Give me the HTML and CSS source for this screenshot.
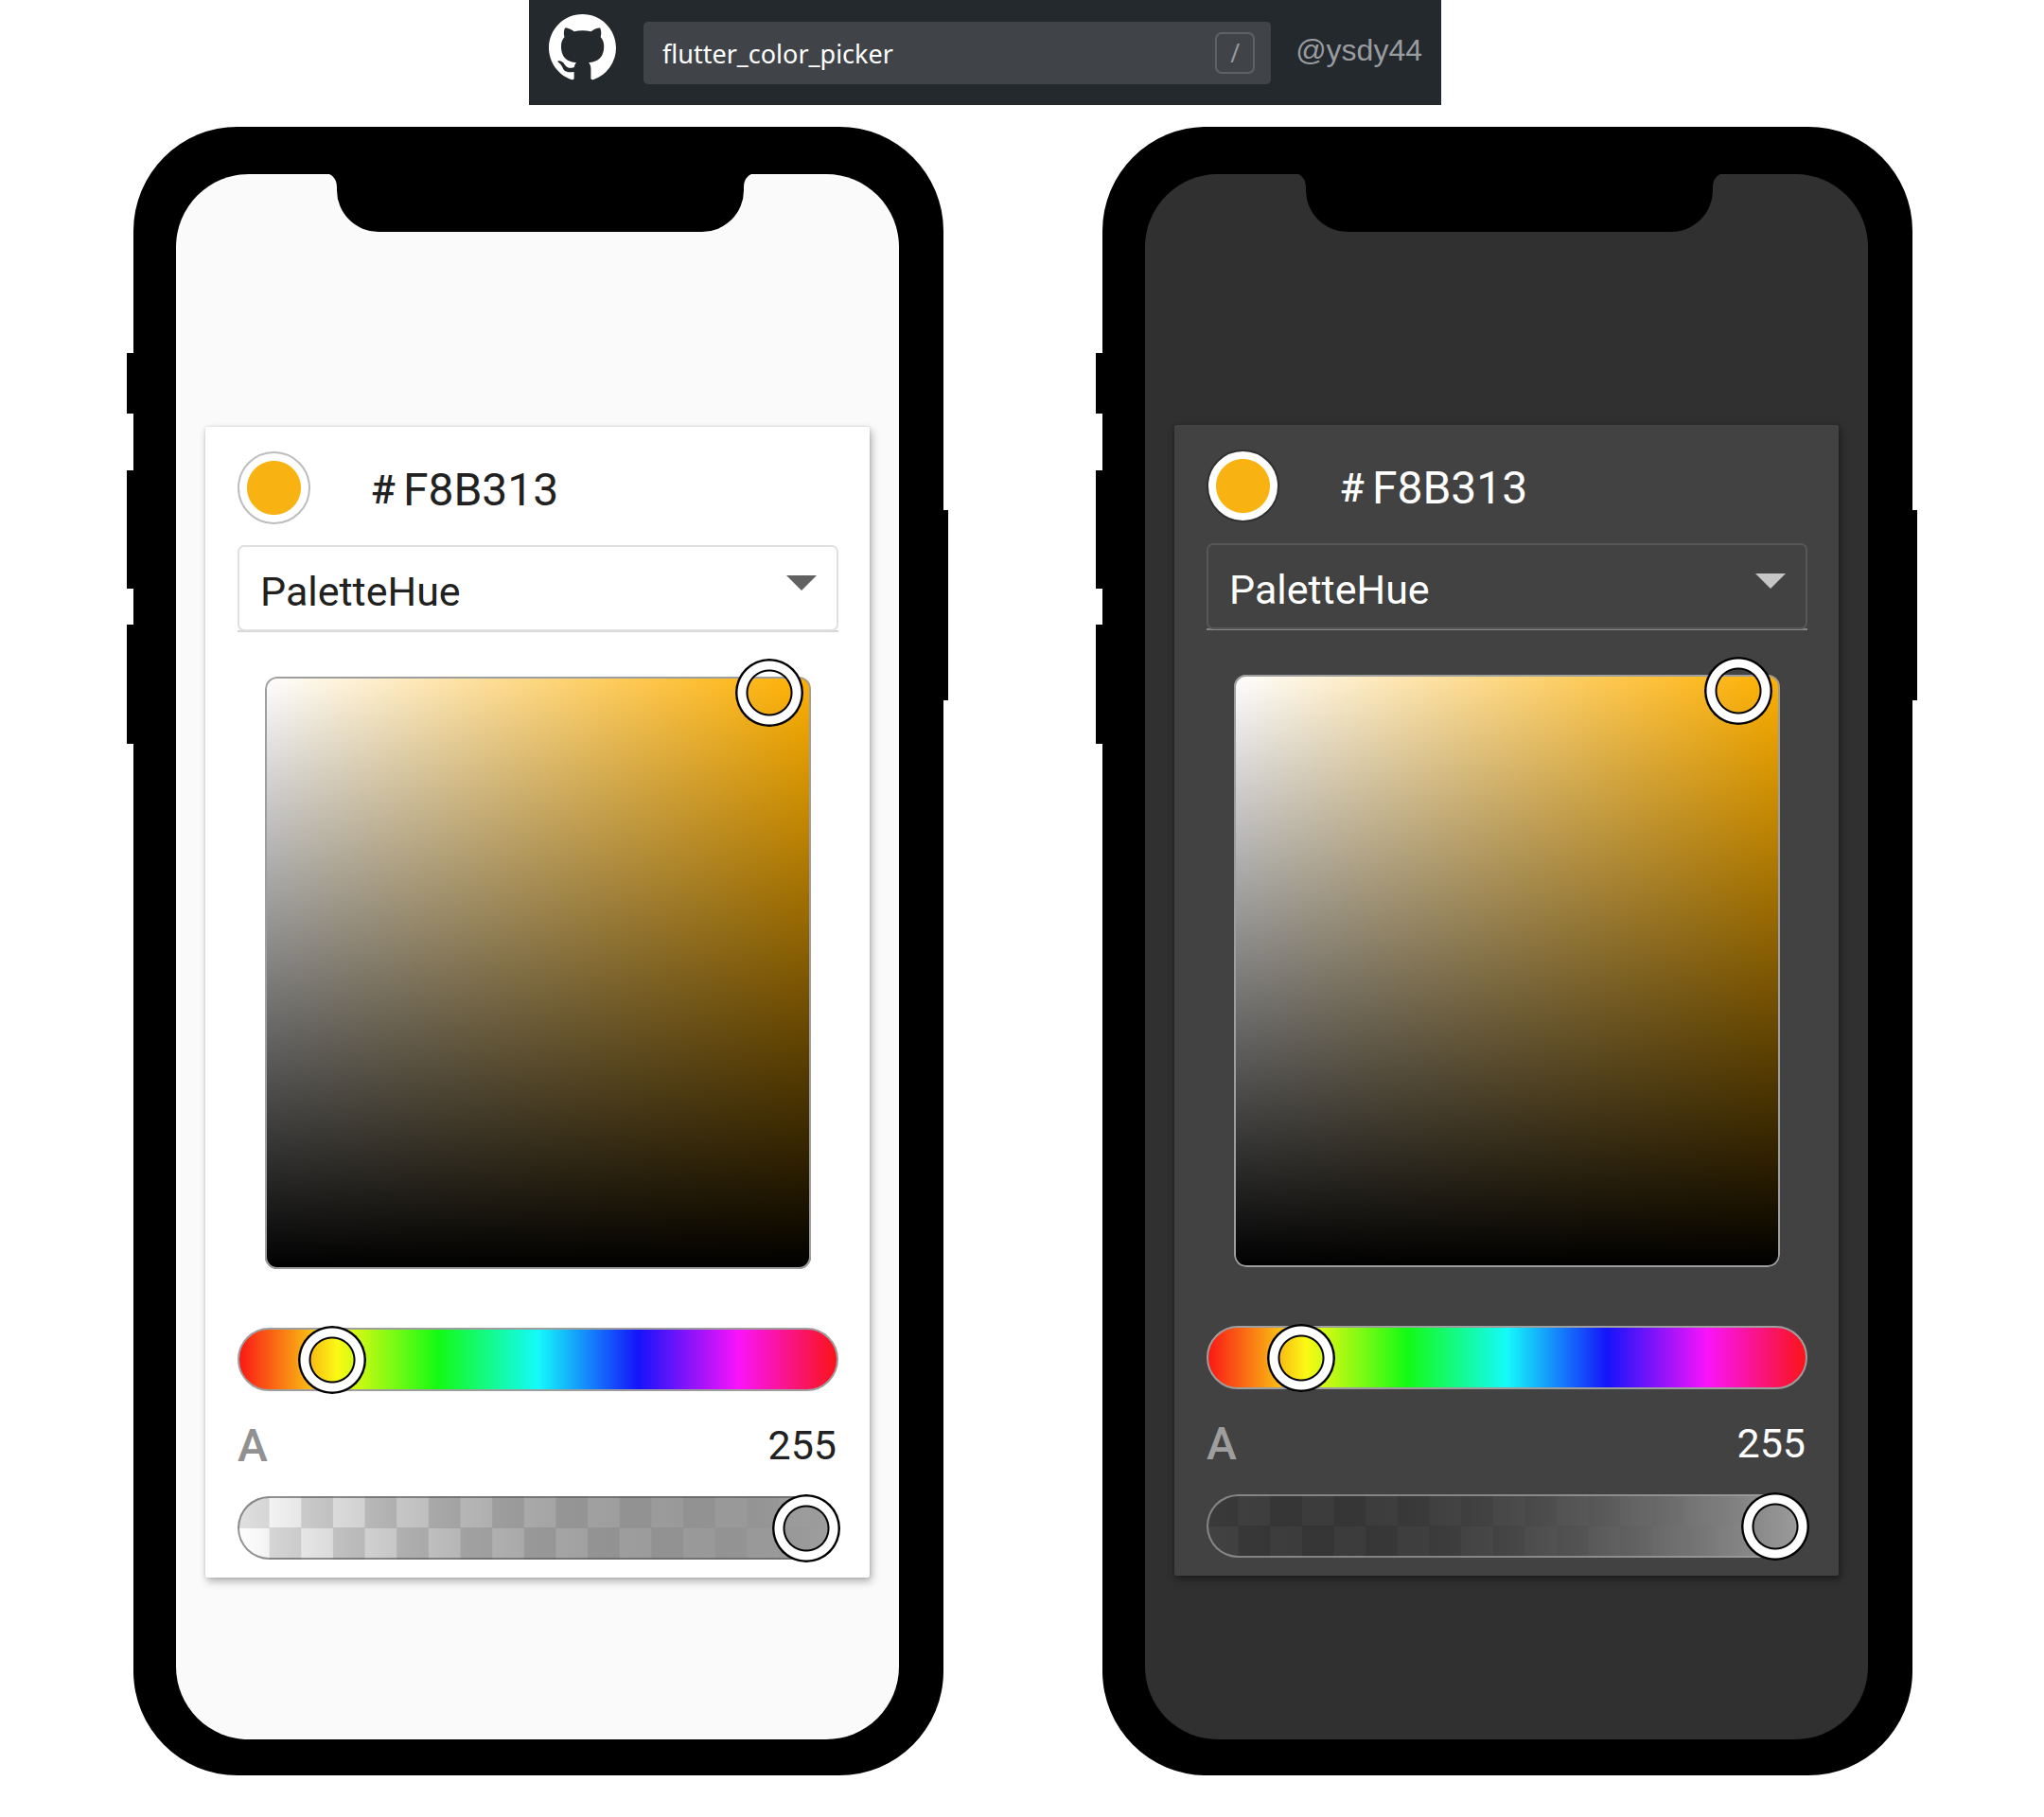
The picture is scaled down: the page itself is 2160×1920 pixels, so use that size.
FILE: index.html
```html
<!DOCTYPE html>
<html lang="en">
<head>
<meta charset="utf-8">
<meta name="viewport" content="width=device-width, initial-scale=1">
<title>flutter_color_picker</title>
<link rel="stylesheet" href="styles.css">
</head>
<body>
<header class="topbar">
  <a class="logo" href="#" aria-label="GitHub">
    <svg viewBox="0 0 16 16" aria-hidden="true"><path d="M8 0C3.58 0 0 3.58 0 8c0 3.54 2.29 6.53 5.47 7.59.4.07.55-.17.55-.38 0-.19-.01-.82-.01-1.49-2.01.37-2.53-.49-2.69-.94-.09-.23-.48-.94-.82-1.13-.28-.15-.68-.52-.01-.53.63-.01 1.08.58 1.23.82.72 1.21 1.87.87 2.33.66.07-.52.28-.87.51-1.07-1.78-.2-3.64-.89-3.64-3.95 0-.87.31-1.59.82-2.15-.08-.2-.36-1.02.08-2.12 0 0 .67-.21 2.2.82.64-.18 1.32-.27 2-.27s1.36.09 2 .27c1.53-1.04 2.2-.82 2.2-.82.44 1.1.16 1.92.08 2.12.51.56.82 1.27.82 2.15 0 3.07-1.87 3.75-3.65 3.95.29.25.54.73.54 1.48 0 1.07-.01 1.93-.01 2.2 0 .21.15.46.55.38A8.01 8.01 0 0 0 16 8c0-4.42-3.58-8-8-8Z"/></svg>
  </a>
  <form class="search">
    <input class="search-input" type="text" value="flutter_color_picker" aria-label="Search" spellcheck="false">
    <kbd class="search-key">/</kbd>
  </form>
  <a class="handle" href="#">@ysdy44</a>
</header>

<main class="phones">
  <section class="phone light">
    <span class="side side-mute"></span>
    <span class="side side-up"></span>
    <span class="side side-down"></span>
    <span class="side side-power"></span>
    <div class="screen">
      <svg class="notch" viewBox="0 0 458 62" aria-hidden="true"><path d="M0 0C9 0 14 6 14 15V18A44 44 0 0 0 58 62H400A44 44 0 0 0 444 18V15C444 6 449 0 458 0Z"/></svg>
      <div class="card">
        <div class="hex-row">
          <span class="swatch"></span>
          <label class="hash" for="hex-light">#</label>
          <input class="hex" id="hex-light" type="text" value="F8B313" spellcheck="false">
        </div>
        <div class="mode">
          <select class="mode-select" aria-label="Palette mode"><option>PaletteHue</option></select>
          <svg class="mode-arrow" viewBox="0 0 32 16" aria-hidden="true"><path d="M0 0H32L16 16Z"/></svg>
        </div>
        <div class="palette"><span class="thumb" style="left:92.3%;top:2.7%"></span></div>
        <div class="slider hue"><input class="range" type="range" min="0" max="360" value="42" aria-label="Hue"></div>
        <div class="alpha-row">
          <label class="alpha-label" for="alpha-light">A</label>
          <output class="alpha-value" for="alpha-light">255</output>
        </div>
        <div class="slider alpha"><input class="range" id="alpha-light" type="range" min="0" max="255" value="255"></div>
      </div>
    </div>
  </section>

  <section class="phone dark">
    <span class="side side-mute"></span>
    <span class="side side-up"></span>
    <span class="side side-down"></span>
    <span class="side side-power"></span>
    <div class="screen">
      <svg class="notch" viewBox="0 0 458 62" aria-hidden="true"><path d="M0 0C9 0 14 6 14 15V18A44 44 0 0 0 58 62H400A44 44 0 0 0 444 18V15C444 6 449 0 458 0Z"/></svg>
      <div class="card">
        <div class="hex-row">
          <span class="swatch"></span>
          <label class="hash" for="hex-dark">#</label>
          <input class="hex" id="hex-dark" type="text" value="F8B313" spellcheck="false">
        </div>
        <div class="mode">
          <select class="mode-select" aria-label="Palette mode"><option>PaletteHue</option></select>
          <svg class="mode-arrow" viewBox="0 0 32 16" aria-hidden="true"><path d="M0 0H32L16 16Z"/></svg>
        </div>
        <div class="palette"><span class="thumb" style="left:92.3%;top:2.7%"></span></div>
        <div class="slider hue"><input class="range" type="range" min="0" max="360" value="42" aria-label="Hue"></div>
        <div class="alpha-row">
          <label class="alpha-label" for="alpha-dark">A</label>
          <output class="alpha-value" for="alpha-dark">255</output>
        </div>
        <div class="slider alpha"><input class="range" id="alpha-dark" type="range" min="0" max="255" value="255"></div>
      </div>
    </div>
  </section>
</main>
</body>
</html>
```
FILE: styles.css
```css
* { box-sizing: border-box; }

body {
  margin: 0;
  padding-bottom: 44px;
  background: #fff;
  font-family: Roboto, "Liberation Sans", sans-serif;
}

input, select { font-family: inherit; }

/* Top bar */
.topbar {
  display: flex;
  align-items: center;
  width: 100%;
  max-width: 964px;
  height: 111px;
  margin: 0 auto;
  padding: 0 20px 0 21px;
  background: #24292e;
}

.logo {
  flex: none;
  width: 71px;
  padding-bottom: 10px;
}

.logo svg {
  display: block;
  width: 100%;
  fill: #fff;
}

.search {
  display: flex;
  flex: 1;
  align-items: center;
  min-width: 0;
  height: 66px;
  margin: 0 26px 0 29px;
  padding: 0 17px 0 20px;
  border-radius: 5px;
  background: #404448;
}

.search-input {
  flex: 1;
  min-width: 0;
  padding: 2px 0 0;
  border: 0;
  outline: 0;
  background: none;
  color: #fff;
  font-family: "Noto Sans", sans-serif;
  font-size: 27px;
}

.search-key {
  display: grid;
  place-items: center;
  width: 42px;
  height: 44px;
  border: 2px solid #5e6266;
  border-radius: 7px;
  color: #979a9c;
  font-family: "Open Sans", sans-serif;
  font-size: 27px;
}

.handle {
  padding-bottom: 4px;
  color: #999c9e;
  font-family: "Liberation Sans", Arial, sans-serif;
  font-size: 32px;
  text-decoration: none;
}

/* Phones */
.phones {
  display: flex;
  justify-content: center;
  gap: 168px;
  padding: 23px 0 0 2px;
}

.phone {
  position: relative;
  display: flex;
  flex: 0 1 856px;
  min-width: 0;
  padding: 50px 47px 38px 45px;
  border-radius: 110px;
  background: #000;
}

.side {
  position: absolute;
  left: -7px;
  width: 8px;
  background: #000;
}

.side-mute { top: 239px; height: 64px; }
.side-up { top: 363px; height: 125px; }
.side-down { top: 526px; height: 126px; }
.side-power { top: 405px; right: -5px; left: auto; height: 201px; }

.screen {
  position: relative;
  flex: 1;
  min-width: 0;
  padding: 267px 31px 170px;
  border-radius: 77px;
  background: var(--screen);
}

.notch {
  position: absolute;
  top: -1px;
  left: 50%;
  width: 458px;
  height: 62px;
  margin-left: -226px;
}

/* Themes */
.light {
  --screen: #fafafa;
  --card: #fff;
  --text: #212121;
  --swatch-line: #bdbdbd;
  --line: #e0e0e0;
  --underline: #d6d6d6;
  --arrow: #616161;
  --muted: #919191;
  --check-a: #e0e0e0;
  --check-b: #fff;
  --alpha-line: rgba(90, 90, 90, .65);
  --shadow: 2px 4px 8px rgba(0, 0, 0, .3), 0 0 3px rgba(0, 0, 0, .15);
}

.dark {
  --screen: #303030;
  --card: #424242;
  --text: #fff;
  --swatch-line: #303030;
  --line: #575757;
  --underline: #858585;
  --arrow: #c6c6c6;
  --muted: #9e9e9e;
  --check-a: #3a3a3a;
  --check-b: #424242;
  --alpha-line: rgba(158, 158, 158, .75);
  --shadow: 2px 4px 8px rgba(0, 0, 0, .4), 0 0 3px rgba(0, 0, 0, .2);
}

.dark .screen { padding-top: 265px; }

/* Picker card */
.card {
  padding: 26px 33px 19px 34px;
  border-radius: 2px;
  background: var(--card);
  box-shadow: var(--shadow);
  color: var(--text);
}

.light .screen { padding-bottom: 171px; }

.hex-row {
  display: flex;
  align-items: center;
  height: 77px;
}

.swatch {
  flex: none;
  width: 77px;
  height: 77px;
  border: 2px solid var(--swatch-line);
  border-radius: 50%;
  background: radial-gradient(circle, #f8b313 28px, #fff 29px);
}

.hash {
  margin-left: 64px;
  padding-top: 3px;
  font-size: 43px;
  font-weight: 500;
}

.hex {
  flex: 1;
  min-width: 0;
  margin-left: 8px;
  padding: 4px 0 0;
  border: 0;
  outline: 0;
  background: none;
  color: inherit;
  font-size: 48px;
}

.mode {
  position: relative;
  height: 92px;
  margin-top: 22px;
  box-shadow: inset 0 -2px var(--underline);
}

.mode-select {
  display: block;
  width: 100%;
  height: 91px;
  padding: 6px 60px 0 22px;
  border: 2px solid var(--line);
  border-radius: 7px;
  outline: 0;
  appearance: none;
  background: none;
  color: inherit;
  font-size: 43px;
}

.mode-arrow {
  position: absolute;
  top: 32px;
  right: 23px;
  width: 32px;
  height: 16px;
  fill: var(--arrow);
  pointer-events: none;
}

.palette {
  position: relative;
  height: 626px;
  margin: 47px 29px 62px;
  border-radius: 13px;
  background:
    linear-gradient(to top, #000, transparent),
    linear-gradient(to right, #fff, #ffb000);
  box-shadow: inset 0 0 0 2px #9e9e9e;
}

/* Ring handle shared by the palette and both sliders */
.thumb {
  position: absolute;
  width: 72px;
  height: 72px;
  margin: -36px 0 0 -36px;
  border-radius: 50%;
  background: radial-gradient(circle, transparent 22px, #000 23px, #000 24px, #fff 25px, #fff 33px, #000 34px);
}

.slider {
  display: grid;
  grid-template: 100% / 100%;
  place-items: center;
  height: 67px;
  border: 2px solid #9e9e9e;
  border-radius: 34px;
}

.hue {
  background: linear-gradient(to right, #fa1414, #fafa14, #14fa14, #14fafa, #1414fa, #fa14fa, #fa1414);
  background-clip: border-box;
  background-origin: border-box;
}

.alpha {
  border-color: var(--alpha-line);
  background:
    linear-gradient(to right,
      rgba(0, 0, 0, 0),
      rgba(20, 20, 20, .125),
      rgba(40, 40, 40, .25),
      rgba(59, 59, 59, .375),
      rgba(79, 79, 79, .5),
      rgba(99, 99, 99, .625),
      rgba(119, 119, 119, .75),
      rgba(138, 138, 138, .875),
      rgb(158, 158, 158)) border-box,
    conic-gradient(var(--check-b) 25%, var(--check-a) 0 50%, var(--check-b) 0 75%, var(--check-a) 0) 0 0 / 10.6% 100% border-box;
}

.range {
  width: calc(100% + 8px);
  height: 72px;
  margin: 0;
  outline: 0;
  appearance: none;
  background: none;
}

.range::-webkit-slider-thumb {
  width: 72px;
  height: 72px;
  border: 0;
  border-radius: 50%;
  appearance: none;
  background: radial-gradient(circle, transparent 22px, #000 23px, #000 24px, #fff 25px, #fff 33px, #000 34px);
}

.alpha-row {
  display: flex;
  align-items: center;
  justify-content: space-between;
  height: 111px;
  padding: 3px 2px 0 0;
}

.alpha-label {
  color: var(--muted);
  font-size: 48px;
  font-weight: 500;
}

.alpha-value { font-size: 43px; }

/* The bar sits a little left of the page centre on wide windows */
@media (min-width: 1100px) {
  .topbar {
    position: relative;
    right: 39px;
  }
}
```
